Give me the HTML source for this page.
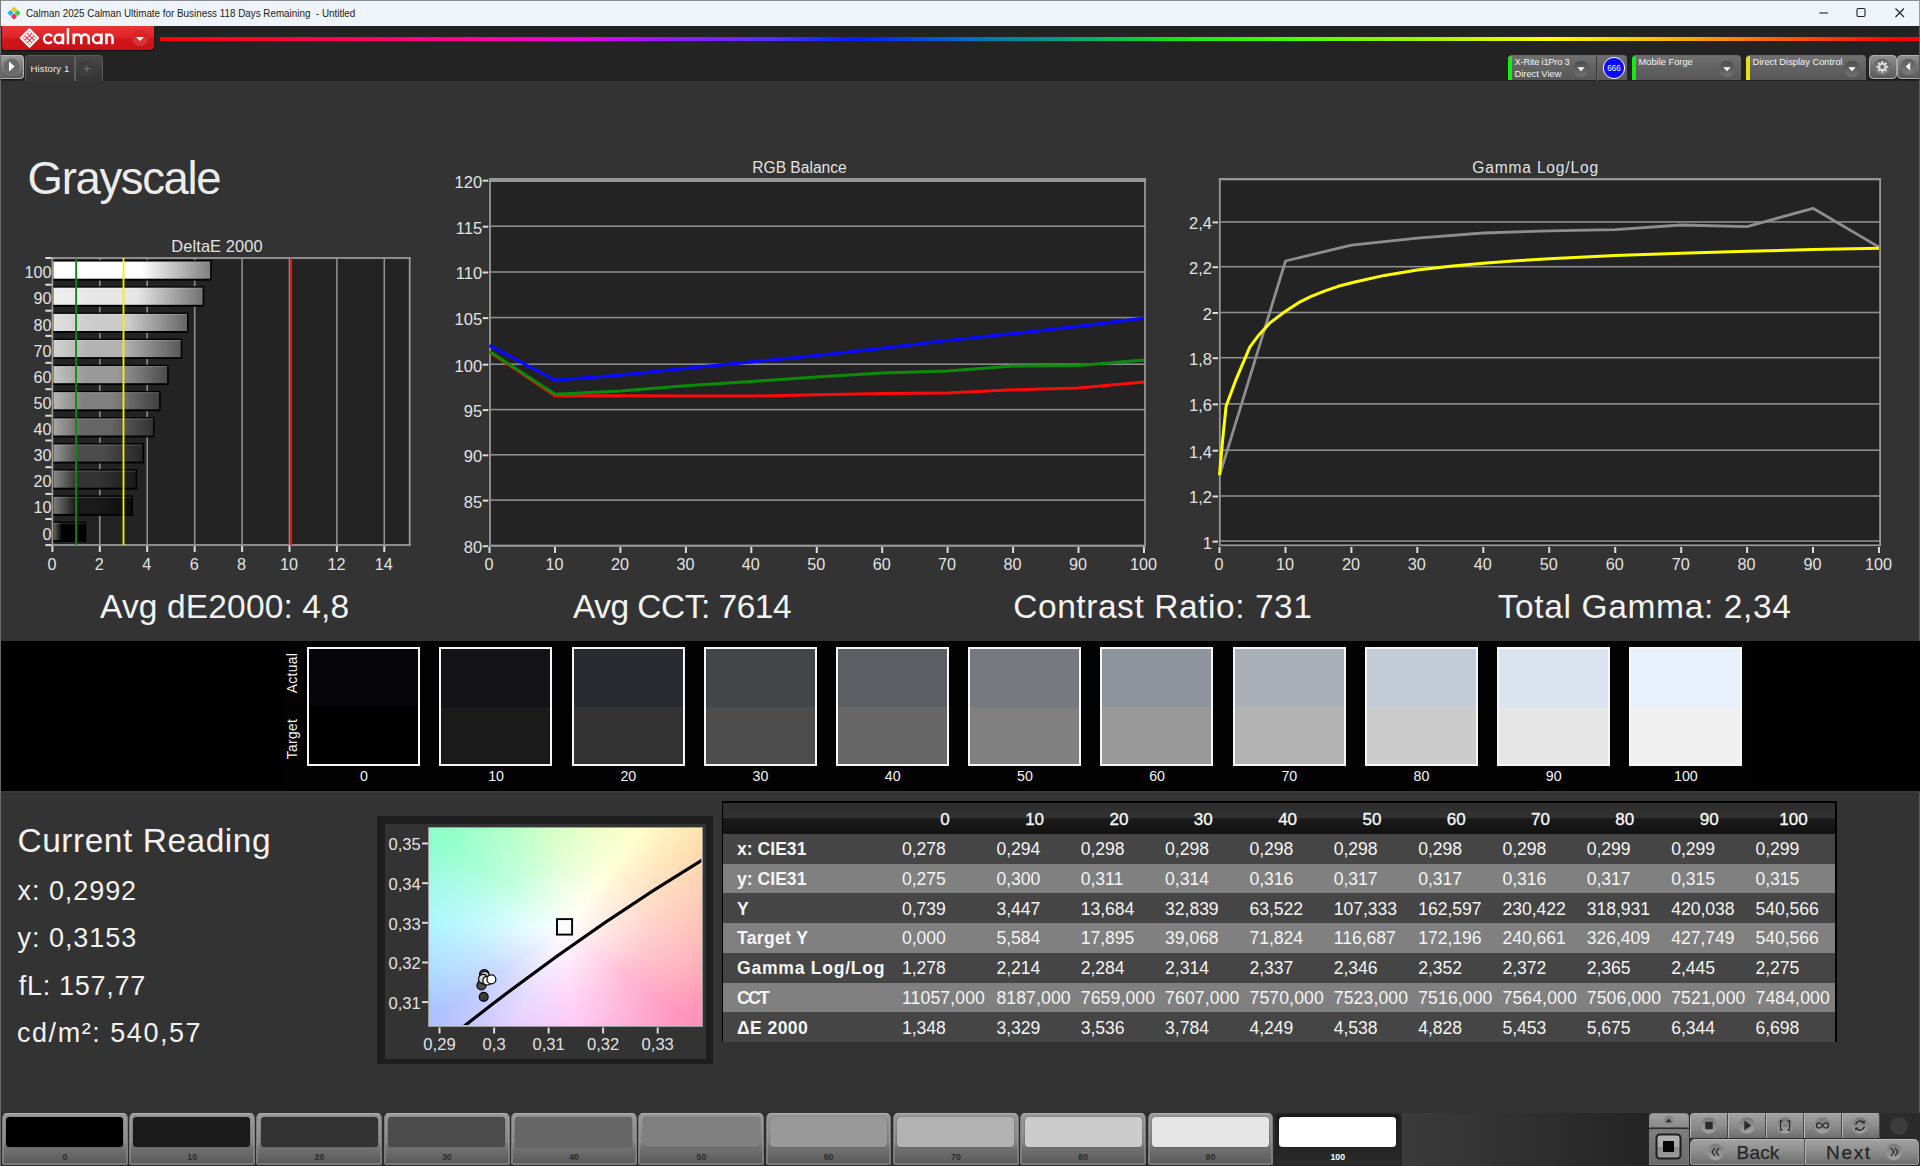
<!DOCTYPE html>
<html><head><meta charset="utf-8"><title>Calman</title>
<style>
*{box-sizing:border-box;margin:0;padding:0}
html,body{width:1920px;height:1166px;overflow:hidden;background:#333;font-family:"Liberation Sans",sans-serif;color:#e6e6e6}
.abs{position:absolute}
#root{position:relative;width:1920px;height:1166px;overflow:hidden;background:#333}
.t{position:absolute;white-space:nowrap;line-height:1}
svg{position:absolute;left:0;top:0;overflow:visible}
svg text{font-family:"Liberation Sans",sans-serif}
</style></head><body><div id="root">

<!-- title bar -->
<div class="abs" style="left:0;top:0;width:1920px;height:26px;background:#eef4f9;border-top:1px solid #8c8f92"></div>
<svg width="22" height="22" style="left:3.3px;top:1.6px" viewBox="0 0 22 22">
 <g transform="translate(11,11) rotate(45) scale(0.72)">
  <rect x="-6.6" y="-6.6" width="6.3" height="6.3" rx="1.5" fill="#f6c416"/>
  <rect x="0.3" y="-6.6" width="6.3" height="6.3" rx="1.5" fill="#3bd23b"/>
  <rect x="-6.6" y="0.3" width="6.3" height="6.3" rx="1.5" fill="#27b7ee"/>
  <rect x="0.3" y="0.3" width="6.3" height="6.3" rx="1.5" fill="#f0325f"/>
 </g>
</svg>
<div class="t" id="ttl" style="left:26px;top:8px;font-size:11.3px;color:#1b1b1b;transform-origin:0 0;transform:scaleX(0.8716)">Calman 2025 Calman Ultimate for Business 118 Days Remaining &nbsp;- Untitled</div>
<svg width="120" height="26" style="left:1800px;top:0">
 <path d="M19.4 13h8.6" stroke="#222" stroke-width="1.1" fill="none"/>
 <rect x="57" y="8.5" width="8" height="8" rx="1.2" fill="none" stroke="#222" stroke-width="1.1"/>
 <path d="M95.5 8.5l8.5 8.5M104 8.5l-8.5 8.5" stroke="#222" stroke-width="1.1" fill="none"/>
</svg>

<!-- top dark band -->
<div class="abs" style="left:0;top:26px;width:1920px;height:55px;background:#232323"></div>
<div class="abs" style="left:0;top:26px;width:1.2px;height:1140px;background:#6a6a6a;z-index:5"></div>
<div class="abs" style="left:160px;top:36.5px;width:1760px;height:4px;background:linear-gradient(90deg,#ff0000 0%,#ff0050 9.7%,#ff00a0 18%,#f000e0 24%,#b010f8 27.3%,#5030ff 34.8%,#0020ff 39.6%,#0070c0 46.2%,#00a878 51.9%,#18e018 57.6%,#40ff00 63.6%,#b4f400 73.1%,#ffff00 78.8%,#ffb000 86.4%,#ff6000 92%,#ff0000 98.9%)"></div>
<!-- logo -->
<div class="abs" style="left:1.5px;top:26px;width:152px;height:24.2px;border-radius:0 0 4px 2px;background:linear-gradient(180deg,#ea3338 0%,#e02429 45%,#d1161b 55%,#c81216 100%);box-shadow:0 1px 1px rgba(0,0,0,.6)"></div>
<svg width="160" height="30" style="left:0;top:24px" viewBox="0 0 160 30">
 <g transform="translate(29.5,14)" fill="none" stroke="#fff" stroke-width="2.1" stroke-linejoin="round">
  <path d="M0 -8.7L8.7 0L0 8.7L-8.7 0Z"/>
 </g>
 <g transform="translate(29.5,14) rotate(45)" fill="#fff">
  <rect x="-4.75" y="-4.75" width="2.6" height="2.6"/><rect x="-1.3" y="-4.75" width="2.6" height="2.6"/><rect x="2.15" y="-4.75" width="2.6" height="2.6"/>
  <rect x="-4.75" y="-1.3" width="2.6" height="2.6"/><rect x="-1.3" y="-1.3" width="2.6" height="2.6"/><rect x="2.15" y="-1.3" width="2.6" height="2.6"/>
  <rect x="-4.75" y="2.15" width="2.6" height="2.6"/><rect x="-1.3" y="2.15" width="2.6" height="2.6"/><rect x="2.15" y="2.15" width="2.6" height="2.6"/>
 </g>
 <g fill="none" stroke="#fff" stroke-width="2.45" stroke-linejoin="round">
  <path d="M51.3 11.6A4.35 4.35 0 1 0 51.3 18" stroke-linecap="round"/>
  <circle cx="58.8" cy="14.8" r="4.3"/><path d="M63 9.4V20.3"/>
  <path d="M67.95 4.3V20.3"/>
  <path d="M73.7 20.3V9.4M73.7 14.3A3.775 3.775 0 0 1 81.25 14.3V20.3M81.25 14.3A3.775 3.775 0 0 1 88.8 14.3V20.3"/>
  <circle cx="97.2" cy="14.8" r="4.3"/><path d="M101.4 9.4V20.3"/>
  <path d="M106.4 20.3V9.4M106.4 13.7A3.075 3.075 0 0 1 112.55 13.7V20.3"/>
 </g>
 <circle cx="140" cy="13.9" r="8.2" fill="#d4262b"/>
 <path d="M140 22.1a8.2 8.2 0 0 0 8.2-8.2h-16.4a8.2 8.2 0 0 0 8.2 8.2z" fill="#dc3a3e" opacity=".6"/>
 <path d="M136 13h8l-4 4.1z" fill="#fff"/>
</svg>

<!-- left tabs -->
<div class="abs" style="left:1px;top:55px;width:23px;height:24px;border-radius:0 4px 4px 0;background:linear-gradient(180deg,#9a9a9a,#5e5e5e);border:1px solid #b4b4b4;border-left:none;box-shadow:0 1px 1px #111"></div>
<svg width="24" height="26" style="left:0;top:54px"><circle cx="11.5" cy="12.5" r="8.3" fill="#6a6a6a"/><circle cx="11.5" cy="13" r="8.3" fill="none" stroke="#7d7d7d" stroke-width=".8"/><path d="M9 7.6v9.8l5.6-4.9z" fill="#fff"/></svg>
<div class="abs" style="left:25px;top:55px;width:50px;height:26px;border-radius:4px 0 0 0;background:linear-gradient(180deg,#464646,#343434);border:1px solid #5a5a5a;border-bottom:none"></div>
<div class="abs" style="left:75px;top:55px;width:28px;height:26px;border-radius:0 4px 0 0;background:linear-gradient(180deg,#484848,#343434);border:1px solid #5a5a5a;border-bottom:none;border-left:1px solid #626262"></div>
<div class="t" style="left:30.5px;top:63.5px;font-size:9.6px;letter-spacing:0.13px;color:#e8e8e8">History 1</div>
<svg width="30" height="26" style="left:74px;top:55px"><circle cx="13" cy="13.5" r="8" fill="#3e3e3e"/><path d="M13 10.4v6.4M9.8 13.6h6.4" stroke="#6c6c6c" stroke-width="1.2"/></svg>
<!-- device selectors -->
<svg width="0" height="0"><defs><linearGradient id="ddg" x1="0" y1="0" x2="0" y2="1"><stop offset="0" stop-color="#4c4c4c"/><stop offset="1" stop-color="#727272"/></linearGradient></defs></svg>
<div class="abs" style="left:1507.5px;top:55px;width:119px;height:25.3px;border-radius:4px 4px 0 0;background:linear-gradient(180deg,#707070 0%,#646464 40%,#575757 100%);overflow:hidden;border-top:1px solid #6c6c6c"><div class="abs" style="left:0;top:-1px;width:4px;height:26px;background:#12ee12"></div></div><div class="t" style="left:1514.5px;top:57.6px;font-size:9.3px;color:#f2f2f2;letter-spacing:-0.2px">X-Rite i1Pro 3</div><div class="t" style="left:1514.5px;top:69.6px;font-size:9.3px;color:#f2f2f2;letter-spacing:0px">Direct View</div><svg width="20" height="20" style="left:1571px;top:58.5px"><circle cx="10" cy="10" r="8.2" fill="url(#ddg)"/><path d="M6.3 8.2h7.4l-3.7 4z" fill="#fff"/></svg><div class="abs" style="left:1596px;top:56px;width:1px;height:25px;background:#3a3a3a"></div><div class="abs" style="left:1597px;top:56px;width:1px;height:25px;background:#666"></div><svg width="26" height="26" style="left:1600.5px;top:54.6px"><circle cx="13" cy="13" r="10.6" fill="#0a0aff" stroke="#fff" stroke-width="1"/><text x="13" y="15.8" font-size="8.2" fill="#fff" text-anchor="middle">666</text></svg>
<div class="abs" style="left:1631.5px;top:55px;width:109px;height:25.3px;border-radius:4px 4px 0 0;background:linear-gradient(180deg,#707070 0%,#646464 40%,#575757 100%);overflow:hidden;border-top:1px solid #6c6c6c"><div class="abs" style="left:0;top:-1px;width:4px;height:26px;background:#12ee12"></div></div><div class="t" style="left:1638.5px;top:57.6px;font-size:9.3px;color:#f2f2f2;letter-spacing:0px">Mobile Forge</div><svg width="20" height="20" style="left:1717px;top:58.5px"><circle cx="10" cy="10" r="8.2" fill="url(#ddg)"/><path d="M6.3 8.2h7.4l-3.7 4z" fill="#fff"/></svg>
<div class="abs" style="left:1745.5px;top:55px;width:120.5px;height:25.3px;border-radius:4px 4px 0 0;background:linear-gradient(180deg,#707070 0%,#646464 40%,#575757 100%);overflow:hidden;border-top:1px solid #6c6c6c"><div class="abs" style="left:0;top:-1px;width:4px;height:26px;background:#e8e010"></div></div><div class="t" style="left:1752.5px;top:57.6px;font-size:9.3px;color:#f2f2f2;letter-spacing:0px">Direct Display Control</div><svg width="20" height="20" style="left:1842px;top:58.5px"><circle cx="10" cy="10" r="8.2" fill="url(#ddg)"/><path d="M6.3 8.2h7.4l-3.7 4z" fill="#fff"/></svg>
<div class="abs" style="left:1868.5px;top:55px;width:28px;height:24px;border-radius:4px;background:linear-gradient(180deg,#8e8e8e,#595959);border:1px solid #b0b0b0;box-shadow:0 1px 1px #111"></div>
<div class="abs" style="left:1897px;top:55px;width:26px;height:24px;border-radius:4px 0 0 4px;background:linear-gradient(180deg,#8e8e8e,#595959);border:1px solid #b0b0b0;box-shadow:0 1px 1px #111"></div>
<svg width="60" height="30" style="left:1866px;top:52px">
 <defs><linearGradient id="gcb" x1="0" y1="0" x2="0" y2="1"><stop offset="0" stop-color="#5e5e5e"/><stop offset="1" stop-color="#7c7c7c"/></linearGradient></defs>
 <circle cx="16.3" cy="14.9" r="8.2" fill="url(#gcb)"/>
 <g transform="translate(16.3,14.9)" fill="none" stroke="#dadada">
  <circle r="3.2" stroke-width="2.1"/>
  <g stroke-width="2.2"><path d="M0 -3.9V-5.9"/><path d="M0 3.9V5.9"/><path d="M-3.9 0H-5.9"/><path d="M3.9 0H5.9"/><path d="M2.76 2.76L4.17 4.17"/><path d="M-2.76 2.76L-4.17 4.17"/><path d="M2.76 -2.76L4.17 -4.17"/><path d="M-2.76 -2.76L-4.17 -4.17"/></g>
 </g>
 <circle cx="42.5" cy="14.9" r="8.2" fill="url(#gcb)"/>
 <path d="M44.2 10.6v7.8l-4.4-3.9z" fill="#fff"/>
</svg>
<div class="abs" style="left:1919px;top:26px;width:1px;height:1140px;background:#5a5a5a"></div>
<div class="abs" style="left:1919px;top:0;width:1px;height:26px;background:#9a9da0"></div>
<div class="abs" style="left:0;top:0;width:1px;height:26px;background:#7a7c7e"></div>
<!-- headings -->
<div class="t" id="gs" style="left:27.6px;top:156.2px;font-size:45.5px;color:#ececec;letter-spacing:-1.35px">Grayscale</div>
<div class="t" id="s1" style="left:100.1px;top:589.6px;font-size:33.5px;color:#f2f2f2;letter-spacing:0.14px">Avg dE2000: 4,8</div>
<div class="t" id="s2" style="left:572.9px;top:589.6px;font-size:33.5px;color:#f2f2f2;letter-spacing:-0.5px">Avg CCT: 7614</div>
<div class="t" id="s3" style="left:1013.2px;top:589.6px;font-size:33.5px;color:#f2f2f2;letter-spacing:0.56px">Contrast Ratio: 731</div>
<div class="t" id="s4" style="left:1497.7px;top:589.6px;font-size:33.5px;color:#f2f2f2;letter-spacing:0.64px">Total Gamma: 2,34</div>
<!-- DeltaE chart -->
<svg width="440" height="330" style="left:0;top:240px" viewBox="0 240 440 330">
<defs>
<linearGradient id="bg0" x1="0" x2="1" y1="0" y2="0"><stop offset="0" stop-color="#666666"/><stop offset="0.28" stop-color="#000000"/><stop offset="0.56" stop-color="#000000"/><stop offset="1" stop-color="#000000"/></linearGradient>
<linearGradient id="bg1" x1="0" x2="1" y1="0" y2="0"><stop offset="0" stop-color="#7a7a7a"/><stop offset="0.28" stop-color="#1a1a1a"/><stop offset="0.56" stop-color="#1a1a1a"/><stop offset="1" stop-color="#0d0d0d"/></linearGradient>
<linearGradient id="bg2" x1="0" x2="1" y1="0" y2="0"><stop offset="0" stop-color="#898989"/><stop offset="0.28" stop-color="#333333"/><stop offset="0.56" stop-color="#333333"/><stop offset="1" stop-color="#1a1a1a"/></linearGradient>
<linearGradient id="bg3" x1="0" x2="1" y1="0" y2="0"><stop offset="0" stop-color="#979797"/><stop offset="0.28" stop-color="#4c4c4c"/><stop offset="0.56" stop-color="#4c4c4c"/><stop offset="1" stop-color="#262626"/></linearGradient>
<linearGradient id="bg4" x1="0" x2="1" y1="0" y2="0"><stop offset="0" stop-color="#a6a6a6"/><stop offset="0.28" stop-color="#666666"/><stop offset="0.56" stop-color="#666666"/><stop offset="1" stop-color="#333333"/></linearGradient>
<linearGradient id="bg5" x1="0" x2="1" y1="0" y2="0"><stop offset="0" stop-color="#b5b5b5"/><stop offset="0.28" stop-color="#808080"/><stop offset="0.56" stop-color="#808080"/><stop offset="1" stop-color="#404040"/></linearGradient>
<linearGradient id="bg6" x1="0" x2="1" y1="0" y2="0"><stop offset="0" stop-color="#c4c4c4"/><stop offset="0.28" stop-color="#999999"/><stop offset="0.56" stop-color="#999999"/><stop offset="1" stop-color="#4c4c4c"/></linearGradient>
<linearGradient id="bg7" x1="0" x2="1" y1="0" y2="0"><stop offset="0" stop-color="#d2d2d2"/><stop offset="0.28" stop-color="#b2b2b2"/><stop offset="0.56" stop-color="#b2b2b2"/><stop offset="1" stop-color="#595959"/></linearGradient>
<linearGradient id="bg8" x1="0" x2="1" y1="0" y2="0"><stop offset="0" stop-color="#e1e1e1"/><stop offset="0.28" stop-color="#cccccc"/><stop offset="0.56" stop-color="#cccccc"/><stop offset="1" stop-color="#666666"/></linearGradient>
<linearGradient id="bg9" x1="0" x2="1" y1="0" y2="0"><stop offset="0" stop-color="#f0f0f0"/><stop offset="0.28" stop-color="#e6e6e6"/><stop offset="0.56" stop-color="#e6e6e6"/><stop offset="1" stop-color="#737373"/></linearGradient>
<linearGradient id="bg10" x1="0" x2="1" y1="0" y2="0"><stop offset="0" stop-color="#ffffff"/><stop offset="0.28" stop-color="#ffffff"/><stop offset="0.56" stop-color="#ffffff"/><stop offset="1" stop-color="#808080"/></linearGradient>
</defs>
<rect x="51.4" y="257.0" width="359.3" height="289.0" fill="#232323"/>
<rect x="99.0" y="258.0" width="1.6" height="287.0" fill="#8e8e8e"/>
<rect x="146.4" y="258.0" width="1.6" height="287.0" fill="#8e8e8e"/>
<rect x="193.9" y="258.0" width="1.6" height="287.0" fill="#8e8e8e"/>
<rect x="241.3" y="258.0" width="1.6" height="287.0" fill="#8e8e8e"/>
<rect x="288.7" y="258.0" width="1.6" height="287.0" fill="#8e8e8e"/>
<rect x="336.1" y="258.0" width="1.6" height="287.0" fill="#8e8e8e"/>
<rect x="383.5" y="258.0" width="1.6" height="287.0" fill="#8e8e8e"/>
<rect x="51.5" y="257.1" width="359.1" height="1.8" fill="#9a9a9a"/>
<rect x="51.5" y="544.1" width="359.1" height="1.8" fill="#9a9a9a"/>
<rect x="51.5" y="257.1" width="1.8" height="288.8" fill="#9a9a9a"/>
<rect x="408.8" y="257.1" width="1.8" height="288.8" fill="#9a9a9a"/>
<rect x="53.4" y="521.5" width="32.9" height="20.4" fill="#000"/>
<rect x="53.4" y="522.9" width="31.4" height="17.1" fill="url(#bg0)"/>
<rect x="53.4" y="522.9" width="31.4" height="1" fill="#fff" opacity="0.18"/>
<rect x="53.4" y="495.4" width="79.6" height="20.4" fill="#000"/>
<rect x="53.4" y="496.8" width="78.1" height="17.1" fill="url(#bg1)"/>
<rect x="53.4" y="496.8" width="78.1" height="1" fill="#fff" opacity="0.18"/>
<rect x="53.4" y="469.2" width="83.8" height="20.4" fill="#000"/>
<rect x="53.4" y="470.6" width="82.3" height="17.1" fill="url(#bg2)"/>
<rect x="53.4" y="470.6" width="82.3" height="1" fill="#fff" opacity="0.18"/>
<rect x="53.4" y="443.1" width="90.5" height="20.4" fill="#000"/>
<rect x="53.4" y="444.5" width="89.0" height="17.1" fill="url(#bg3)"/>
<rect x="53.4" y="444.5" width="89.0" height="1" fill="#fff" opacity="0.18"/>
<rect x="53.4" y="417.0" width="101.1" height="20.4" fill="#000"/>
<rect x="53.4" y="418.4" width="99.6" height="17.1" fill="url(#bg4)"/>
<rect x="53.4" y="418.4" width="99.6" height="1" fill="#fff" opacity="0.18"/>
<rect x="53.4" y="390.9" width="107.2" height="20.4" fill="#000"/>
<rect x="53.4" y="392.2" width="105.7" height="17.1" fill="url(#bg5)"/>
<rect x="53.4" y="392.2" width="105.7" height="1" fill="#fff" opacity="0.18"/>
<rect x="53.4" y="364.7" width="115.2" height="20.4" fill="#000"/>
<rect x="53.4" y="366.1" width="113.7" height="17.1" fill="url(#bg6)"/>
<rect x="53.4" y="366.1" width="113.7" height="1" fill="#fff" opacity="0.18"/>
<rect x="53.4" y="338.6" width="128.8" height="20.4" fill="#000"/>
<rect x="53.4" y="340.0" width="127.3" height="17.1" fill="url(#bg7)"/>
<rect x="53.4" y="340.0" width="127.3" height="1" fill="#fff" opacity="0.18"/>
<rect x="53.4" y="312.5" width="135.1" height="20.4" fill="#000"/>
<rect x="53.4" y="313.9" width="133.6" height="17.1" fill="url(#bg8)"/>
<rect x="53.4" y="313.9" width="133.6" height="1" fill="#fff" opacity="0.18"/>
<rect x="53.4" y="286.3" width="150.7" height="20.4" fill="#000"/>
<rect x="53.4" y="287.7" width="149.2" height="17.1" fill="url(#bg9)"/>
<rect x="53.4" y="287.7" width="149.2" height="1" fill="#fff" opacity="0.18"/>
<rect x="53.4" y="260.2" width="158.2" height="20.4" fill="#000"/>
<rect x="53.4" y="261.6" width="156.7" height="17.1" fill="url(#bg10)"/>
<rect x="53.4" y="261.6" width="156.7" height="1" fill="#fff" opacity="0.18"/>
<rect x="75.2" y="258.0" width="1.8" height="287.0" fill="#0c8a0c"/>
<rect x="122.6" y="258.0" width="1.8" height="287.0" fill="#f6f000"/>
<rect x="290.3" y="258.0" width="1.8" height="287.0" fill="#f41010"/>
<rect x="45.3" y="257.0" width="6.4" height="2" fill="#dcdcdc"/>
<rect x="45.3" y="283.7" width="6.4" height="2" fill="#dcdcdc"/>
<rect x="45.3" y="309.7" width="6.4" height="2" fill="#dcdcdc"/>
<rect x="45.3" y="334.9" width="6.4" height="2" fill="#dcdcdc"/>
<rect x="45.3" y="361.8" width="6.4" height="2" fill="#dcdcdc"/>
<rect x="45.3" y="388.2" width="6.4" height="2" fill="#dcdcdc"/>
<rect x="45.3" y="414.7" width="6.4" height="2" fill="#dcdcdc"/>
<rect x="45.3" y="439.5" width="6.4" height="2" fill="#dcdcdc"/>
<rect x="45.3" y="466.2" width="6.4" height="2" fill="#dcdcdc"/>
<rect x="45.3" y="492.9" width="6.4" height="2" fill="#dcdcdc"/>
<rect x="45.3" y="518.0" width="6.4" height="2" fill="#dcdcdc"/>
<rect x="45.3" y="544.1" width="6.4" height="2" fill="#dcdcdc"/>
<text x="51.5" y="539.5" font-size="16.2" fill="#e2e2e2" text-anchor="end">0</text>
<text x="51.5" y="513.4" font-size="16.2" fill="#e2e2e2" text-anchor="end">10</text>
<text x="51.5" y="487.2" font-size="16.2" fill="#e2e2e2" text-anchor="end">20</text>
<text x="51.5" y="461.1" font-size="16.2" fill="#e2e2e2" text-anchor="end">30</text>
<text x="51.5" y="435.0" font-size="16.2" fill="#e2e2e2" text-anchor="end">40</text>
<text x="51.5" y="408.9" font-size="16.2" fill="#e2e2e2" text-anchor="end">50</text>
<text x="51.5" y="382.7" font-size="16.2" fill="#e2e2e2" text-anchor="end">60</text>
<text x="51.5" y="356.6" font-size="16.2" fill="#e2e2e2" text-anchor="end">70</text>
<text x="51.5" y="330.5" font-size="16.2" fill="#e2e2e2" text-anchor="end">80</text>
<text x="51.5" y="304.3" font-size="16.2" fill="#e2e2e2" text-anchor="end">90</text>
<text x="51.5" y="278.2" font-size="16.2" fill="#e2e2e2" text-anchor="end">100</text>
<rect x="51.4" y="546.0" width="2" height="6" fill="#dcdcdc"/>
<text x="51.9" y="570.2" font-size="16.2" fill="#e2e2e2" text-anchor="middle">0</text>
<rect x="98.8" y="546.0" width="2" height="6" fill="#dcdcdc"/>
<text x="99.3" y="570.2" font-size="16.2" fill="#e2e2e2" text-anchor="middle">2</text>
<rect x="146.2" y="546.0" width="2" height="6" fill="#dcdcdc"/>
<text x="146.7" y="570.2" font-size="16.2" fill="#e2e2e2" text-anchor="middle">4</text>
<rect x="193.7" y="546.0" width="2" height="6" fill="#dcdcdc"/>
<text x="194.2" y="570.2" font-size="16.2" fill="#e2e2e2" text-anchor="middle">6</text>
<rect x="241.1" y="546.0" width="2" height="6" fill="#dcdcdc"/>
<text x="241.6" y="570.2" font-size="16.2" fill="#e2e2e2" text-anchor="middle">8</text>
<rect x="288.5" y="546.0" width="2" height="6" fill="#dcdcdc"/>
<text x="289.0" y="570.2" font-size="16.2" fill="#e2e2e2" text-anchor="middle">10</text>
<rect x="335.9" y="546.0" width="2" height="6" fill="#dcdcdc"/>
<text x="336.4" y="570.2" font-size="16.2" fill="#e2e2e2" text-anchor="middle">12</text>
<rect x="383.3" y="546.0" width="2" height="6" fill="#dcdcdc"/>
<text x="383.8" y="570.2" font-size="16.2" fill="#e2e2e2" text-anchor="middle">14</text>
<text x="217" y="252.2" font-size="16.4" fill="#e2e2e2" text-anchor="middle" letter-spacing="0.1">DeltaE 2000</text>
</svg>
<!-- RGB Balance -->
<svg width="1920" height="600" style="left:0;top:0">
<rect x="489.0" y="179.0" width="657.0" height="367.0" fill="#232323"/>
<rect x="490.0" y="544.9" width="655.0" height="1.6" fill="#8e8e8e"/>
<rect x="482.7" y="545.2" width="5.6" height="2" fill="#dcdcdc"/>
<text x="482.1" y="553.1" font-size="16.5" fill="#e2e2e2" text-anchor="end">80</text>
<rect x="490.0" y="499.3" width="655.0" height="1.6" fill="#8e8e8e"/>
<rect x="482.7" y="499.6" width="5.6" height="2" fill="#dcdcdc"/>
<text x="482.1" y="507.5" font-size="16.5" fill="#e2e2e2" text-anchor="end">85</text>
<rect x="490.0" y="454.0" width="655.0" height="1.6" fill="#8e8e8e"/>
<rect x="482.7" y="454.3" width="5.6" height="2" fill="#dcdcdc"/>
<text x="482.1" y="462.2" font-size="16.5" fill="#e2e2e2" text-anchor="end">90</text>
<rect x="490.0" y="408.8" width="655.0" height="1.6" fill="#8e8e8e"/>
<rect x="482.7" y="409.1" width="5.6" height="2" fill="#dcdcdc"/>
<text x="482.1" y="417.0" font-size="16.5" fill="#e2e2e2" text-anchor="end">95</text>
<rect x="490.0" y="363.4" width="655.0" height="1.6" fill="#8e8e8e"/>
<rect x="482.7" y="363.7" width="5.6" height="2" fill="#dcdcdc"/>
<text x="482.1" y="371.6" font-size="16.5" fill="#e2e2e2" text-anchor="end">100</text>
<rect x="490.0" y="316.8" width="655.0" height="1.6" fill="#8e8e8e"/>
<rect x="482.7" y="317.1" width="5.6" height="2" fill="#dcdcdc"/>
<text x="482.1" y="325.0" font-size="16.5" fill="#e2e2e2" text-anchor="end">105</text>
<rect x="490.0" y="271.2" width="655.0" height="1.6" fill="#8e8e8e"/>
<rect x="482.7" y="271.5" width="5.6" height="2" fill="#dcdcdc"/>
<text x="482.1" y="279.4" font-size="16.5" fill="#e2e2e2" text-anchor="end">110</text>
<rect x="490.0" y="225.4" width="655.0" height="1.6" fill="#8e8e8e"/>
<rect x="482.7" y="225.7" width="5.6" height="2" fill="#dcdcdc"/>
<text x="482.1" y="233.6" font-size="16.5" fill="#e2e2e2" text-anchor="end">115</text>
<rect x="490.0" y="179.4" width="655.0" height="1.6" fill="#8e8e8e"/>
<rect x="482.7" y="179.7" width="5.6" height="2" fill="#dcdcdc"/>
<text x="482.1" y="187.6" font-size="16.5" fill="#e2e2e2" text-anchor="end">120</text>
<rect x="489.0" y="178" width="657.0" height="4" fill="#989898"/>
<rect x="489.0" y="544.7" width="657.0" height="2" fill="#989898"/>
<rect x="489.1" y="178" width="1.8" height="368" fill="#989898"/>
<rect x="1144.1" y="178" width="1.8" height="368" fill="#989898"/>
<rect x="488.5" y="547.0" width="2" height="6" fill="#dcdcdc"/>
<text x="489.0" y="570.2" font-size="16.2" fill="#e2e2e2" text-anchor="middle">0</text>
<rect x="554.0" y="547.0" width="2" height="6" fill="#dcdcdc"/>
<text x="554.5" y="570.2" font-size="16.2" fill="#e2e2e2" text-anchor="middle">10</text>
<rect x="619.4" y="547.0" width="2" height="6" fill="#dcdcdc"/>
<text x="619.9" y="570.2" font-size="16.2" fill="#e2e2e2" text-anchor="middle">20</text>
<rect x="684.9" y="547.0" width="2" height="6" fill="#dcdcdc"/>
<text x="685.4" y="570.2" font-size="16.2" fill="#e2e2e2" text-anchor="middle">30</text>
<rect x="750.3" y="547.0" width="2" height="6" fill="#dcdcdc"/>
<text x="750.8" y="570.2" font-size="16.2" fill="#e2e2e2" text-anchor="middle">40</text>
<rect x="815.8" y="547.0" width="2" height="6" fill="#dcdcdc"/>
<text x="816.2" y="570.2" font-size="16.2" fill="#e2e2e2" text-anchor="middle">50</text>
<rect x="881.2" y="547.0" width="2" height="6" fill="#dcdcdc"/>
<text x="881.7" y="570.2" font-size="16.2" fill="#e2e2e2" text-anchor="middle">60</text>
<rect x="946.6" y="547.0" width="2" height="6" fill="#dcdcdc"/>
<text x="947.1" y="570.2" font-size="16.2" fill="#e2e2e2" text-anchor="middle">70</text>
<rect x="1012.1" y="547.0" width="2" height="6" fill="#dcdcdc"/>
<text x="1012.6" y="570.2" font-size="16.2" fill="#e2e2e2" text-anchor="middle">80</text>
<rect x="1077.5" y="547.0" width="2" height="6" fill="#dcdcdc"/>
<text x="1078.0" y="570.2" font-size="16.2" fill="#e2e2e2" text-anchor="middle">90</text>
<rect x="1143.0" y="547.0" width="2" height="6" fill="#dcdcdc"/>
<text x="1143.5" y="570.2" font-size="16.2" fill="#e2e2e2" text-anchor="middle">100</text>
<text x="799.5" y="173.2" font-size="15.6" fill="#e2e2e2" text-anchor="middle" letter-spacing="0">RGB Balance</text>
<path d="M489.5 351.9 L555.0 395.7 L620.4 395.7 L685.9 396.1 L751.3 396.1 L816.8 394.8 L882.2 393.4 L947.6 393.0 L1013.1 389.8 L1078.5 387.9 L1144.0 382.0" fill="none" stroke="#ff0a0a" stroke-width="3.0" stroke-linejoin="round" stroke-linecap="butt"/>
<path d="M489.5 351.4 L555.0 394.3 L620.4 391.1 L685.9 385.7 L751.3 381.5 L816.8 377.0 L882.2 372.9 L947.6 371.1 L1013.1 366.0 L1078.5 365.6 L1144.0 360.1" fill="none" stroke="#0a8c0a" stroke-width="3.0" stroke-linejoin="round" stroke-linecap="butt"/>
<path d="M489.5 345.5 L555.0 380.2 L620.4 375.2 L685.9 368.3 L751.3 361.9 L816.8 355.5 L882.2 348.3 L947.6 340.5 L1013.1 333.7 L1078.5 326.4 L1144.0 318.1" fill="none" stroke="#0a0aff" stroke-width="3.2" stroke-linejoin="round" stroke-linecap="butt"/>
</svg>
<!-- Gamma Log/Log -->
<svg width="1920" height="600" style="left:0;top:0">
<rect x="1218.8" y="179.0" width="662.3" height="367.0" fill="#232323"/>
<rect x="1219.8" y="540.3" width="660.3" height="1.6" fill="#8e8e8e"/>
<rect x="1212.5" y="540.6" width="5.6" height="2" fill="#dcdcdc"/>
<text x="1211.8999999999999" y="548.5" font-size="16.5" fill="#e2e2e2" text-anchor="end">1</text>
<rect x="1219.8" y="495.2" width="660.3" height="1.6" fill="#8e8e8e"/>
<rect x="1212.5" y="495.5" width="5.6" height="2" fill="#dcdcdc"/>
<text x="1211.8999999999999" y="503.4" font-size="16.5" fill="#e2e2e2" text-anchor="end">1,2</text>
<rect x="1219.8" y="449.4" width="660.3" height="1.6" fill="#8e8e8e"/>
<rect x="1212.5" y="449.7" width="5.6" height="2" fill="#dcdcdc"/>
<text x="1211.8999999999999" y="457.6" font-size="16.5" fill="#e2e2e2" text-anchor="end">1,4</text>
<rect x="1219.8" y="403.1" width="660.3" height="1.6" fill="#8e8e8e"/>
<rect x="1212.5" y="403.4" width="5.6" height="2" fill="#dcdcdc"/>
<text x="1211.8999999999999" y="411.3" font-size="16.5" fill="#e2e2e2" text-anchor="end">1,6</text>
<rect x="1219.8" y="356.9" width="660.3" height="1.6" fill="#8e8e8e"/>
<rect x="1212.5" y="357.2" width="5.6" height="2" fill="#dcdcdc"/>
<text x="1211.8999999999999" y="365.1" font-size="16.5" fill="#e2e2e2" text-anchor="end">1,8</text>
<rect x="1219.8" y="311.7" width="660.3" height="1.6" fill="#8e8e8e"/>
<rect x="1212.5" y="312.0" width="5.6" height="2" fill="#dcdcdc"/>
<text x="1211.8999999999999" y="319.9" font-size="16.5" fill="#e2e2e2" text-anchor="end">2</text>
<rect x="1219.8" y="265.9" width="660.3" height="1.6" fill="#8e8e8e"/>
<rect x="1212.5" y="266.2" width="5.6" height="2" fill="#dcdcdc"/>
<text x="1211.8999999999999" y="274.1" font-size="16.5" fill="#e2e2e2" text-anchor="end">2,2</text>
<rect x="1219.8" y="221.1" width="660.3" height="1.6" fill="#8e8e8e"/>
<rect x="1212.5" y="221.4" width="5.6" height="2" fill="#dcdcdc"/>
<text x="1211.8999999999999" y="229.3" font-size="16.5" fill="#e2e2e2" text-anchor="end">2,4</text>
<rect x="1218.8" y="178" width="662.3" height="2.3" fill="#989898"/>
<rect x="1218.8" y="542.1" width="662.3" height="2.3" fill="#1c1c1c"/>
<rect x="1218.8" y="544.4" width="662.3" height="1.7" fill="#989898"/>
<rect x="1218.8999999999999" y="178" width="1.8" height="368" fill="#989898"/>
<rect x="1879.1999999999998" y="178" width="1.8" height="368" fill="#989898"/>
<rect x="1218.5" y="547.0" width="2" height="6" fill="#dcdcdc"/>
<text x="1219.0" y="570.2" font-size="16.2" fill="#e2e2e2" text-anchor="middle">0</text>
<rect x="1284.5" y="547.0" width="2" height="6" fill="#dcdcdc"/>
<text x="1285.0" y="570.2" font-size="16.2" fill="#e2e2e2" text-anchor="middle">10</text>
<rect x="1350.4" y="547.0" width="2" height="6" fill="#dcdcdc"/>
<text x="1350.9" y="570.2" font-size="16.2" fill="#e2e2e2" text-anchor="middle">20</text>
<rect x="1416.3" y="547.0" width="2" height="6" fill="#dcdcdc"/>
<text x="1416.8" y="570.2" font-size="16.2" fill="#e2e2e2" text-anchor="middle">30</text>
<rect x="1482.3" y="547.0" width="2" height="6" fill="#dcdcdc"/>
<text x="1482.8" y="570.2" font-size="16.2" fill="#e2e2e2" text-anchor="middle">40</text>
<rect x="1548.2" y="547.0" width="2" height="6" fill="#dcdcdc"/>
<text x="1548.8" y="570.2" font-size="16.2" fill="#e2e2e2" text-anchor="middle">50</text>
<rect x="1614.2" y="547.0" width="2" height="6" fill="#dcdcdc"/>
<text x="1614.7" y="570.2" font-size="16.2" fill="#e2e2e2" text-anchor="middle">60</text>
<rect x="1680.2" y="547.0" width="2" height="6" fill="#dcdcdc"/>
<text x="1680.7" y="570.2" font-size="16.2" fill="#e2e2e2" text-anchor="middle">70</text>
<rect x="1746.1" y="547.0" width="2" height="6" fill="#dcdcdc"/>
<text x="1746.6" y="570.2" font-size="16.2" fill="#e2e2e2" text-anchor="middle">80</text>
<rect x="1812.0" y="547.0" width="2" height="6" fill="#dcdcdc"/>
<text x="1812.5" y="570.2" font-size="16.2" fill="#e2e2e2" text-anchor="middle">90</text>
<rect x="1878.0" y="547.0" width="2" height="6" fill="#dcdcdc"/>
<text x="1878.5" y="570.2" font-size="16.2" fill="#e2e2e2" text-anchor="middle">100</text>
<text x="1535.6" y="173.2" font-size="15.6" fill="#e2e2e2" text-anchor="middle" letter-spacing="0.8">Gamma Log/Log</text>
<path d="M1219.5 475.6 L1285.5 261.0 L1351.4 245.1 L1417.3 238.2 L1483.3 233.0 L1549.2 230.9 L1615.2 229.6 L1681.2 225.0 L1747.1 226.6 L1813.0 208.3 L1879.0 247.1" fill="none" stroke="#8e8e8e" stroke-width="2.8" stroke-linejoin="round" stroke-linecap="butt"/>
<path d="M1219.5 475.1 L1222.8 438.4 L1226.1 406.3 L1236.0 379.6 L1249.8 347.2 L1259.1 334.7 L1270.3 322.6 L1285.5 311.2 L1298.6 302.7 L1311.2 296.4 L1325.0 290.9 L1338.2 286.3 L1356.0 281.8 L1384.4 275.4 L1417.3 270.1 L1450.3 266.3 L1483.3 263.3 L1516.3 260.8 L1549.2 258.7 L1615.2 255.5 L1681.2 253.3 L1747.1 251.2 L1813.0 249.6 L1879.0 248.2" fill="none" stroke="#ffff00" stroke-width="3.0" stroke-linejoin="round" stroke-linecap="butt"/>
</svg>
<!-- swatch band -->
<div class="abs" style="left:0;top:640.5px;width:1920px;height:150.5px;background:#000"></div>
<div class="abs" style="left:284px;top:641px;width:1470px;height:149px;background:#020202"></div>
<div class="abs" style="left:307.1px;top:647.1px;width:113.2px;height:118.6px;border:2px solid #f6f6f6;background:linear-gradient(180deg,#050509 0,#050509 50%,#000000 50%,#000000 100%)"></div>
<div class="t" style="left:307.1px;top:769.2px;width:113.6px;text-align:center;font-size:14.2px;color:#f4f4f4">0</div>
<div class="abs" style="left:439.3px;top:647.1px;width:113.2px;height:118.6px;border:2px solid #f6f6f6;background:linear-gradient(180deg,#131318 0,#131318 50%,#1a1a1a 50%,#1a1a1a 100%)"></div>
<div class="t" style="left:439.3px;top:769.2px;width:113.6px;text-align:center;font-size:14.2px;color:#f4f4f4">10</div>
<div class="abs" style="left:571.5px;top:647.1px;width:113.2px;height:118.6px;border:2px solid #f6f6f6;background:linear-gradient(180deg,#2a2b30 0,#2a2b30 50%,#333333 50%,#333333 100%)"></div>
<div class="t" style="left:571.5px;top:769.2px;width:113.6px;text-align:center;font-size:14.2px;color:#f4f4f4">20</div>
<div class="abs" style="left:703.7px;top:647.1px;width:113.2px;height:118.6px;border:2px solid #f6f6f6;background:linear-gradient(180deg,#434649 0,#434649 50%,#4d4d4d 50%,#4d4d4d 100%)"></div>
<div class="t" style="left:703.7px;top:769.2px;width:113.6px;text-align:center;font-size:14.2px;color:#f4f4f4">30</div>
<div class="abs" style="left:835.9px;top:647.1px;width:113.2px;height:118.6px;border:2px solid #f6f6f6;background:linear-gradient(180deg,#5b5f63 0,#5b5f63 50%,#666666 50%,#666666 100%)"></div>
<div class="t" style="left:835.9px;top:769.2px;width:113.6px;text-align:center;font-size:14.2px;color:#f4f4f4">40</div>
<div class="abs" style="left:968.1px;top:647.1px;width:113.2px;height:118.6px;border:2px solid #f6f6f6;background:linear-gradient(180deg,#767a80 0,#767a80 50%,#808080 50%,#808080 100%)"></div>
<div class="t" style="left:968.1px;top:769.2px;width:113.6px;text-align:center;font-size:14.2px;color:#f4f4f4">50</div>
<div class="abs" style="left:1100.3px;top:647.1px;width:113.2px;height:118.6px;border:2px solid #f6f6f6;background:linear-gradient(180deg,#8f959c 0,#8f959c 50%,#999999 50%,#999999 100%)"></div>
<div class="t" style="left:1100.3px;top:769.2px;width:113.6px;text-align:center;font-size:14.2px;color:#f4f4f4">60</div>
<div class="abs" style="left:1232.5px;top:647.1px;width:113.2px;height:118.6px;border:2px solid #f6f6f6;background:linear-gradient(180deg,#a8afb7 0,#a8afb7 50%,#b3b3b3 50%,#b3b3b3 100%)"></div>
<div class="t" style="left:1232.5px;top:769.2px;width:113.6px;text-align:center;font-size:14.2px;color:#f4f4f4">70</div>
<div class="abs" style="left:1364.7px;top:647.1px;width:113.2px;height:118.6px;border:2px solid #f6f6f6;background:linear-gradient(180deg,#c3cbd6 0,#c3cbd6 50%,#cccccc 50%,#cccccc 100%)"></div>
<div class="t" style="left:1364.7px;top:769.2px;width:113.6px;text-align:center;font-size:14.2px;color:#f4f4f4">80</div>
<div class="abs" style="left:1496.9px;top:647.1px;width:113.2px;height:118.6px;border:2px solid #f6f6f6;background:linear-gradient(180deg,#dae4f1 0,#dae4f1 50%,#e6e6e6 50%,#e6e6e6 100%)"></div>
<div class="t" style="left:1496.9px;top:769.2px;width:113.6px;text-align:center;font-size:14.2px;color:#f4f4f4">90</div>
<div class="abs" style="left:1629.1px;top:647.1px;width:113.2px;height:118.6px;border:2px solid #f6f6f6;background:linear-gradient(180deg,#e8effd 0,#e8effd 50%,#f0f0f0 50%,#f0f0f0 100%)"></div>
<div class="t" style="left:1629.1px;top:769.2px;width:113.6px;text-align:center;font-size:14.2px;color:#f4f4f4">100</div>
<div class="t" style="left:292.6px;top:673.3px;font-size:13.8px;letter-spacing:0.35px;color:#f4f4f4;transform:translate(-50%,-50%) rotate(-90deg)">Actual</div>
<div class="t" style="left:292.6px;top:739.2px;font-size:13.8px;letter-spacing:0.35px;color:#f4f4f4;transform:translate(-50%,-50%) rotate(-90deg)">Target</div>
<div class="abs" style="left:0;top:791.3px;width:1920px;height:1.5px;background:#3a3a3a"></div>
<!-- current reading -->
<div class="t" id="cr" style="left:17.5px;top:824.2px;font-size:33.5px;color:#f2f2f2;letter-spacing:0.52px">Current Reading</div>
<div class="t" id="r0" style="left:17.6px;top:878.4px;font-size:27px;color:#f2f2f2;letter-spacing:0.93px">x: 0,2992</div>
<div class="t" id="r1" style="left:17.6px;top:925.1px;font-size:27px;color:#f2f2f2;letter-spacing:0.95px">y: 0,3153</div>
<div class="t" id="r2" style="left:18.8px;top:972.9px;font-size:27px;color:#f2f2f2;letter-spacing:0.7px">fL: 157,77</div>
<div class="t" id="r3" style="left:17.0px;top:1019.6px;font-size:27px;color:#f2f2f2;letter-spacing:1.54px">cd/m²: 540,57</div>
<!-- CIE -->
<div class="abs" style="left:377px;top:816.4px;width:336px;height:247.2px;background:#1e1e1e"></div>
<div class="abs" style="left:385px;top:824.2px;width:321px;height:234.5px;background:#333"></div>
<div class="abs" style="left:428.2px;top:827.2px;width:274.59999999999997px;height:199.39999999999986px;border:1.5px solid #9a9a9a;background:radial-gradient(ellipse 80% 90% at 49.5% 50.5%,#fff 0%,rgba(255,255,255,.86) 9%,rgba(255,255,255,.42) 38%,rgba(255,255,255,.1) 72%,rgba(255,255,255,0) 100%),conic-gradient(from 0deg at 49.5% 50.5%,#d0ffb4 0deg,#ffffc0 38deg,#ffdca8 58deg,#ffb0a8 92deg,#ff88b4 126deg,#ffb8f4 175deg,#dcc4ff 208deg,#a4bcff 236deg,#98f4ff 272deg,#84ffc4 306deg,#a8ffb8 335deg,#d0ffb4 360deg)"></div>
<svg width="1920" height="1166" style="left:0;top:0">
<defs><clipPath id="ciec"><rect x="429.7" y="828.7" width="271.59999999999997" height="196.39999999999986"/></clipPath></defs>
<path d="M462.6 1027.4 Q582.55 932.4 702.5 859.8" clip-path="url(#ciec)" fill="none" stroke="#000" stroke-width="3.2"/>
<rect x="557" y="919.1" width="15.1" height="15.5" fill="#fbfbfb" stroke="#000" stroke-width="1.9"/>
<circle cx="483.7" cy="996.9" r="4.45" fill="#3a3a3a" stroke="#050505" stroke-width="1.25"/>
<circle cx="481.4" cy="985.4" r="4.45" fill="#4c4c4c" stroke="#050505" stroke-width="1.25"/>
<circle cx="483.3" cy="979.5" r="4.45" fill="#666" stroke="#050505" stroke-width="1.25"/>
<circle cx="484.0" cy="974.3" r="4.45" fill="#808080" stroke="#050505" stroke-width="1.25"/>
<circle cx="484.4" cy="974.2" r="4.45" fill="#999" stroke="#050505" stroke-width="1.25"/>
<circle cx="484.8" cy="975.9" r="4.45" fill="#c6c6c6" stroke="#050505" stroke-width="1.25"/>
<circle cx="483.0" cy="978.9" r="4.45" fill="#d2d2d2" stroke="#050505" stroke-width="1.25"/>
<circle cx="487.3" cy="980.7" r="4.45" fill="#f3f3f3" stroke="#050505" stroke-width="1.25"/>
<circle cx="491.4" cy="979.4" r="4.45" fill="#fff" stroke="#050505" stroke-width="1.25"/>
<rect x="422" y="1001.1" width="6" height="2" fill="#dcdcdc"/>
<text x="420.8" y="1009.0" font-size="16.6" fill="#e2e2e2" text-anchor="end">0,31</text>
<rect x="422" y="961.5" width="6" height="2" fill="#dcdcdc"/>
<text x="420.8" y="969.4" font-size="16.6" fill="#e2e2e2" text-anchor="end">0,32</text>
<rect x="422" y="921.8" width="6" height="2" fill="#dcdcdc"/>
<text x="420.8" y="929.7" font-size="16.6" fill="#e2e2e2" text-anchor="end">0,33</text>
<rect x="422" y="882.2" width="6" height="2" fill="#dcdcdc"/>
<text x="420.8" y="890.1" font-size="16.6" fill="#e2e2e2" text-anchor="end">0,34</text>
<rect x="422" y="842.5" width="6" height="2" fill="#dcdcdc"/>
<text x="420.8" y="850.4" font-size="16.6" fill="#e2e2e2" text-anchor="end">0,35</text>
<rect x="438.5" y="1027.5" width="2" height="6" fill="#dcdcdc"/>
<text x="439.5" y="1050.3" font-size="16.6" fill="#e2e2e2" text-anchor="middle">0,29</text>
<rect x="493.1" y="1027.5" width="2" height="6" fill="#dcdcdc"/>
<text x="494.1" y="1050.3" font-size="16.6" fill="#e2e2e2" text-anchor="middle">0,3</text>
<rect x="547.6" y="1027.5" width="2" height="6" fill="#dcdcdc"/>
<text x="548.6" y="1050.3" font-size="16.6" fill="#e2e2e2" text-anchor="middle">0,31</text>
<rect x="602.1" y="1027.5" width="2" height="6" fill="#dcdcdc"/>
<text x="603.1" y="1050.3" font-size="16.6" fill="#e2e2e2" text-anchor="middle">0,32</text>
<rect x="656.7" y="1027.5" width="2" height="6" fill="#dcdcdc"/>
<text x="657.7" y="1050.3" font-size="16.6" fill="#e2e2e2" text-anchor="middle">0,33</text>
</svg>
<!-- table -->
<div class="abs" style="left:721.5px;top:801px;width:1115.5px;height:241px;background:#000"></div>
<div class="abs" style="left:723px;top:803px;width:1112.3px;height:31.3px;background:linear-gradient(180deg,#2d2d2d 0%,#313131 47%,#1a1a1a 51%,#121212 100%)"></div>
<div class="abs" style="left:723px;top:834.00px;width:1112.3px;height:30.02px;background:#454545"></div>
<div class="t" style="left:737px;top:841.2px;font-size:17.6px;font-weight:bold;color:#f6f6f6;letter-spacing:0.0px">x: CIE31</div>
<div class="t" style="left:902.0px;top:841.2px;font-size:17.6px;color:#f4f4f4;letter-spacing:-0.05px">0,278</div>
<div class="t" style="left:996.4px;top:841.2px;font-size:17.6px;color:#f4f4f4;letter-spacing:-0.05px">0,294</div>
<div class="t" style="left:1080.8px;top:841.2px;font-size:17.6px;color:#f4f4f4;letter-spacing:-0.05px">0,298</div>
<div class="t" style="left:1165.1px;top:841.2px;font-size:17.6px;color:#f4f4f4;letter-spacing:-0.05px">0,298</div>
<div class="t" style="left:1249.5px;top:841.2px;font-size:17.6px;color:#f4f4f4;letter-spacing:-0.05px">0,298</div>
<div class="t" style="left:1333.8px;top:841.2px;font-size:17.6px;color:#f4f4f4;letter-spacing:-0.05px">0,298</div>
<div class="t" style="left:1418.2px;top:841.2px;font-size:17.6px;color:#f4f4f4;letter-spacing:-0.05px">0,298</div>
<div class="t" style="left:1502.5px;top:841.2px;font-size:17.6px;color:#f4f4f4;letter-spacing:-0.05px">0,298</div>
<div class="t" style="left:1586.8px;top:841.2px;font-size:17.6px;color:#f4f4f4;letter-spacing:-0.05px">0,299</div>
<div class="t" style="left:1671.2px;top:841.2px;font-size:17.6px;color:#f4f4f4;letter-spacing:-0.05px">0,299</div>
<div class="t" style="left:1755.5px;top:841.2px;font-size:17.6px;color:#f4f4f4;letter-spacing:-0.05px">0,299</div>
<div class="abs" style="left:723px;top:863.72px;width:1112.3px;height:30.02px;background:#808080"></div>
<div class="t" style="left:737px;top:870.9px;font-size:17.6px;font-weight:bold;color:#f6f6f6;letter-spacing:0.0px">y: CIE31</div>
<div class="t" style="left:902.0px;top:870.9px;font-size:17.6px;color:#f4f4f4;letter-spacing:-0.05px">0,275</div>
<div class="t" style="left:996.4px;top:870.9px;font-size:17.6px;color:#f4f4f4;letter-spacing:-0.05px">0,300</div>
<div class="t" style="left:1080.8px;top:870.9px;font-size:17.6px;color:#f4f4f4;letter-spacing:-0.05px">0,311</div>
<div class="t" style="left:1165.1px;top:870.9px;font-size:17.6px;color:#f4f4f4;letter-spacing:-0.05px">0,314</div>
<div class="t" style="left:1249.5px;top:870.9px;font-size:17.6px;color:#f4f4f4;letter-spacing:-0.05px">0,316</div>
<div class="t" style="left:1333.8px;top:870.9px;font-size:17.6px;color:#f4f4f4;letter-spacing:-0.05px">0,317</div>
<div class="t" style="left:1418.2px;top:870.9px;font-size:17.6px;color:#f4f4f4;letter-spacing:-0.05px">0,317</div>
<div class="t" style="left:1502.5px;top:870.9px;font-size:17.6px;color:#f4f4f4;letter-spacing:-0.05px">0,316</div>
<div class="t" style="left:1586.8px;top:870.9px;font-size:17.6px;color:#f4f4f4;letter-spacing:-0.05px">0,317</div>
<div class="t" style="left:1671.2px;top:870.9px;font-size:17.6px;color:#f4f4f4;letter-spacing:-0.05px">0,315</div>
<div class="t" style="left:1755.5px;top:870.9px;font-size:17.6px;color:#f4f4f4;letter-spacing:-0.05px">0,315</div>
<div class="abs" style="left:723px;top:893.44px;width:1112.3px;height:30.02px;background:#454545"></div>
<div class="t" style="left:737px;top:900.6px;font-size:17.6px;font-weight:bold;color:#f6f6f6;letter-spacing:0.0px">Y</div>
<div class="t" style="left:902.0px;top:900.6px;font-size:17.6px;color:#f4f4f4;letter-spacing:-0.05px">0,739</div>
<div class="t" style="left:996.4px;top:900.6px;font-size:17.6px;color:#f4f4f4;letter-spacing:-0.05px">3,447</div>
<div class="t" style="left:1080.8px;top:900.6px;font-size:17.6px;color:#f4f4f4;letter-spacing:-0.05px">13,684</div>
<div class="t" style="left:1165.1px;top:900.6px;font-size:17.6px;color:#f4f4f4;letter-spacing:-0.05px">32,839</div>
<div class="t" style="left:1249.5px;top:900.6px;font-size:17.6px;color:#f4f4f4;letter-spacing:-0.05px">63,522</div>
<div class="t" style="left:1333.8px;top:900.6px;font-size:17.6px;color:#f4f4f4;letter-spacing:-0.05px">107,333</div>
<div class="t" style="left:1418.2px;top:900.6px;font-size:17.6px;color:#f4f4f4;letter-spacing:-0.05px">162,597</div>
<div class="t" style="left:1502.5px;top:900.6px;font-size:17.6px;color:#f4f4f4;letter-spacing:-0.05px">230,422</div>
<div class="t" style="left:1586.8px;top:900.6px;font-size:17.6px;color:#f4f4f4;letter-spacing:-0.05px">318,931</div>
<div class="t" style="left:1671.2px;top:900.6px;font-size:17.6px;color:#f4f4f4;letter-spacing:-0.05px">420,038</div>
<div class="t" style="left:1755.5px;top:900.6px;font-size:17.6px;color:#f4f4f4;letter-spacing:-0.05px">540,566</div>
<div class="abs" style="left:723px;top:923.16px;width:1112.3px;height:30.02px;background:#808080"></div>
<div class="t" style="left:737px;top:930.4px;font-size:17.6px;font-weight:bold;color:#f6f6f6;letter-spacing:0.3px">Target Y</div>
<div class="t" style="left:902.0px;top:930.4px;font-size:17.6px;color:#f4f4f4;letter-spacing:-0.05px">0,000</div>
<div class="t" style="left:996.4px;top:930.4px;font-size:17.6px;color:#f4f4f4;letter-spacing:-0.05px">5,584</div>
<div class="t" style="left:1080.8px;top:930.4px;font-size:17.6px;color:#f4f4f4;letter-spacing:-0.05px">17,895</div>
<div class="t" style="left:1165.1px;top:930.4px;font-size:17.6px;color:#f4f4f4;letter-spacing:-0.05px">39,068</div>
<div class="t" style="left:1249.5px;top:930.4px;font-size:17.6px;color:#f4f4f4;letter-spacing:-0.05px">71,824</div>
<div class="t" style="left:1333.8px;top:930.4px;font-size:17.6px;color:#f4f4f4;letter-spacing:-0.05px">116,687</div>
<div class="t" style="left:1418.2px;top:930.4px;font-size:17.6px;color:#f4f4f4;letter-spacing:-0.05px">172,196</div>
<div class="t" style="left:1502.5px;top:930.4px;font-size:17.6px;color:#f4f4f4;letter-spacing:-0.05px">240,661</div>
<div class="t" style="left:1586.8px;top:930.4px;font-size:17.6px;color:#f4f4f4;letter-spacing:-0.05px">326,409</div>
<div class="t" style="left:1671.2px;top:930.4px;font-size:17.6px;color:#f4f4f4;letter-spacing:-0.05px">427,749</div>
<div class="t" style="left:1755.5px;top:930.4px;font-size:17.6px;color:#f4f4f4;letter-spacing:-0.05px">540,566</div>
<div class="abs" style="left:723px;top:952.88px;width:1112.3px;height:30.02px;background:#454545"></div>
<div class="t" style="left:737px;top:960.1px;font-size:17.6px;font-weight:bold;color:#f6f6f6;letter-spacing:0.72px">Gamma Log/Log</div>
<div class="t" style="left:902.0px;top:960.1px;font-size:17.6px;color:#f4f4f4;letter-spacing:-0.05px">1,278</div>
<div class="t" style="left:996.4px;top:960.1px;font-size:17.6px;color:#f4f4f4;letter-spacing:-0.05px">2,214</div>
<div class="t" style="left:1080.8px;top:960.1px;font-size:17.6px;color:#f4f4f4;letter-spacing:-0.05px">2,284</div>
<div class="t" style="left:1165.1px;top:960.1px;font-size:17.6px;color:#f4f4f4;letter-spacing:-0.05px">2,314</div>
<div class="t" style="left:1249.5px;top:960.1px;font-size:17.6px;color:#f4f4f4;letter-spacing:-0.05px">2,337</div>
<div class="t" style="left:1333.8px;top:960.1px;font-size:17.6px;color:#f4f4f4;letter-spacing:-0.05px">2,346</div>
<div class="t" style="left:1418.2px;top:960.1px;font-size:17.6px;color:#f4f4f4;letter-spacing:-0.05px">2,352</div>
<div class="t" style="left:1502.5px;top:960.1px;font-size:17.6px;color:#f4f4f4;letter-spacing:-0.05px">2,372</div>
<div class="t" style="left:1586.8px;top:960.1px;font-size:17.6px;color:#f4f4f4;letter-spacing:-0.05px">2,365</div>
<div class="t" style="left:1671.2px;top:960.1px;font-size:17.6px;color:#f4f4f4;letter-spacing:-0.05px">2,445</div>
<div class="t" style="left:1755.5px;top:960.1px;font-size:17.6px;color:#f4f4f4;letter-spacing:-0.05px">2,275</div>
<div class="abs" style="left:723px;top:982.60px;width:1112.3px;height:30.02px;background:#808080"></div>
<div class="t" style="left:737px;top:989.8px;font-size:17.6px;font-weight:bold;color:#f6f6f6;letter-spacing:-1.7px">CCT</div>
<div class="t" style="left:902.0px;top:989.8px;font-size:17.6px;color:#f4f4f4;letter-spacing:0.12px">11057,000</div>
<div class="t" style="left:996.4px;top:989.8px;font-size:17.6px;color:#f4f4f4;letter-spacing:0.12px">8187,000</div>
<div class="t" style="left:1080.8px;top:989.8px;font-size:17.6px;color:#f4f4f4;letter-spacing:0.12px">7659,000</div>
<div class="t" style="left:1165.1px;top:989.8px;font-size:17.6px;color:#f4f4f4;letter-spacing:0.12px">7607,000</div>
<div class="t" style="left:1249.5px;top:989.8px;font-size:17.6px;color:#f4f4f4;letter-spacing:0.12px">7570,000</div>
<div class="t" style="left:1333.8px;top:989.8px;font-size:17.6px;color:#f4f4f4;letter-spacing:0.12px">7523,000</div>
<div class="t" style="left:1418.2px;top:989.8px;font-size:17.6px;color:#f4f4f4;letter-spacing:0.12px">7516,000</div>
<div class="t" style="left:1502.5px;top:989.8px;font-size:17.6px;color:#f4f4f4;letter-spacing:0.12px">7564,000</div>
<div class="t" style="left:1586.8px;top:989.8px;font-size:17.6px;color:#f4f4f4;letter-spacing:0.12px">7506,000</div>
<div class="t" style="left:1671.2px;top:989.8px;font-size:17.6px;color:#f4f4f4;letter-spacing:0.12px">7521,000</div>
<div class="t" style="left:1755.5px;top:989.8px;font-size:17.6px;color:#f4f4f4;letter-spacing:0.12px">7484,000</div>
<div class="abs" style="left:723px;top:1012.32px;width:1112.3px;height:30.02px;background:#454545"></div>
<div class="t" style="left:737px;top:1019.5px;font-size:17.6px;font-weight:bold;color:#f6f6f6;letter-spacing:0.4px">ΔE 2000</div>
<div class="t" style="left:902.0px;top:1019.5px;font-size:17.6px;color:#f4f4f4;letter-spacing:-0.05px">1,348</div>
<div class="t" style="left:996.4px;top:1019.5px;font-size:17.6px;color:#f4f4f4;letter-spacing:-0.05px">3,329</div>
<div class="t" style="left:1080.8px;top:1019.5px;font-size:17.6px;color:#f4f4f4;letter-spacing:-0.05px">3,536</div>
<div class="t" style="left:1165.1px;top:1019.5px;font-size:17.6px;color:#f4f4f4;letter-spacing:-0.05px">3,784</div>
<div class="t" style="left:1249.5px;top:1019.5px;font-size:17.6px;color:#f4f4f4;letter-spacing:-0.05px">4,249</div>
<div class="t" style="left:1333.8px;top:1019.5px;font-size:17.6px;color:#f4f4f4;letter-spacing:-0.05px">4,538</div>
<div class="t" style="left:1418.2px;top:1019.5px;font-size:17.6px;color:#f4f4f4;letter-spacing:-0.05px">4,828</div>
<div class="t" style="left:1502.5px;top:1019.5px;font-size:17.6px;color:#f4f4f4;letter-spacing:-0.05px">5,453</div>
<div class="t" style="left:1586.8px;top:1019.5px;font-size:17.6px;color:#f4f4f4;letter-spacing:-0.05px">5,675</div>
<div class="t" style="left:1671.2px;top:1019.5px;font-size:17.6px;color:#f4f4f4;letter-spacing:-0.05px">6,344</div>
<div class="t" style="left:1755.5px;top:1019.5px;font-size:17.6px;color:#f4f4f4;letter-spacing:-0.05px">6,698</div>
<div class="t" style="left:905.0px;width:80px;text-align:center;top:810.6px;font-size:17px;color:#fafafa;-webkit-text-stroke:0.3px #fafafa">0</div>
<div class="t" style="left:994.6px;width:80px;text-align:center;top:810.6px;font-size:17px;color:#fafafa;-webkit-text-stroke:0.3px #fafafa">10</div>
<div class="t" style="left:1078.9px;width:80px;text-align:center;top:810.6px;font-size:17px;color:#fafafa;-webkit-text-stroke:0.3px #fafafa">20</div>
<div class="t" style="left:1163.2px;width:80px;text-align:center;top:810.6px;font-size:17px;color:#fafafa;-webkit-text-stroke:0.3px #fafafa">30</div>
<div class="t" style="left:1247.6px;width:80px;text-align:center;top:810.6px;font-size:17px;color:#fafafa;-webkit-text-stroke:0.3px #fafafa">40</div>
<div class="t" style="left:1331.9px;width:80px;text-align:center;top:810.6px;font-size:17px;color:#fafafa;-webkit-text-stroke:0.3px #fafafa">50</div>
<div class="t" style="left:1416.2px;width:80px;text-align:center;top:810.6px;font-size:17px;color:#fafafa;-webkit-text-stroke:0.3px #fafafa">60</div>
<div class="t" style="left:1500.5px;width:80px;text-align:center;top:810.6px;font-size:17px;color:#fafafa;-webkit-text-stroke:0.3px #fafafa">70</div>
<div class="t" style="left:1584.8px;width:80px;text-align:center;top:810.6px;font-size:17px;color:#fafafa;-webkit-text-stroke:0.3px #fafafa">80</div>
<div class="t" style="left:1669.2px;width:80px;text-align:center;top:810.6px;font-size:17px;color:#fafafa;-webkit-text-stroke:0.3px #fafafa">90</div>
<div class="t" style="left:1753.5px;width:80px;text-align:center;top:810.6px;font-size:17px;color:#fafafa;-webkit-text-stroke:0.3px #fafafa">100</div>
<!-- bottom bar -->
<div class="abs" style="left:0;top:1113px;width:1920px;height:53px;background:#2c2c2c"></div>
<div class="abs" style="left:1402px;top:1113px;width:247px;height:53px;background:linear-gradient(90deg,#3b3b3b,#242424)"></div>
<div class="abs" style="left:1.9px;top:1113px;width:125.8px;height:51.6px;border-radius:5px 5px 2px 2px;background:linear-gradient(180deg,#9c9c9c 0%,#8a8a8a 55%,#707070 70%,#5a5a5a 100%);border:1px solid #7a7a7a;border-top-color:#b0b0b0;box-shadow:inset 0 0 0 0.5px #999"></div>
<div class="abs" style="left:6.1px;top:1117.4px;width:117px;height:29.8px;border-radius:3.5px;background:#000000;box-shadow:0 0 1.5px rgba(0,0,0,.55)"></div>
<div class="t" style="left:1.9px;top:1152.5px;width:126px;text-align:center;font-size:8.8px;color:#2c2c2c;font-weight:bold">0</div>
<div class="abs" style="left:129.2px;top:1113px;width:125.8px;height:51.6px;border-radius:5px 5px 2px 2px;background:linear-gradient(180deg,#9c9c9c 0%,#8a8a8a 55%,#707070 70%,#5a5a5a 100%);border:1px solid #7a7a7a;border-top-color:#b0b0b0;box-shadow:inset 0 0 0 0.5px #999"></div>
<div class="abs" style="left:133.3px;top:1117.4px;width:117px;height:29.8px;border-radius:3.5px;background:#1a1a1a;box-shadow:0 0 1.5px rgba(0,0,0,.55)"></div>
<div class="t" style="left:129.2px;top:1152.5px;width:126px;text-align:center;font-size:8.8px;color:#2c2c2c;font-weight:bold">10</div>
<div class="abs" style="left:256.4px;top:1113px;width:125.8px;height:51.6px;border-radius:5px 5px 2px 2px;background:linear-gradient(180deg,#9c9c9c 0%,#8a8a8a 55%,#707070 70%,#5a5a5a 100%);border:1px solid #7a7a7a;border-top-color:#b0b0b0;box-shadow:inset 0 0 0 0.5px #999"></div>
<div class="abs" style="left:260.6px;top:1117.4px;width:117px;height:29.8px;border-radius:3.5px;background:#333333;box-shadow:0 0 1.5px rgba(0,0,0,.55)"></div>
<div class="t" style="left:256.4px;top:1152.5px;width:126px;text-align:center;font-size:8.8px;color:#2c2c2c;font-weight:bold">20</div>
<div class="abs" style="left:383.8px;top:1113px;width:125.8px;height:51.6px;border-radius:5px 5px 2px 2px;background:linear-gradient(180deg,#9c9c9c 0%,#8a8a8a 55%,#707070 70%,#5a5a5a 100%);border:1px solid #7a7a7a;border-top-color:#b0b0b0;box-shadow:inset 0 0 0 0.5px #999"></div>
<div class="abs" style="left:387.9px;top:1117.4px;width:117px;height:29.8px;border-radius:3.5px;background:#4c4c4c;box-shadow:0 0 1.5px rgba(0,0,0,.55)"></div>
<div class="t" style="left:383.8px;top:1152.5px;width:126px;text-align:center;font-size:8.8px;color:#2c2c2c;font-weight:bold">30</div>
<div class="abs" style="left:511.1px;top:1113px;width:125.8px;height:51.6px;border-radius:5px 5px 2px 2px;background:linear-gradient(180deg,#9c9c9c 0%,#8a8a8a 55%,#707070 70%,#5a5a5a 100%);border:1px solid #7a7a7a;border-top-color:#b0b0b0;box-shadow:inset 0 0 0 0.5px #999"></div>
<div class="abs" style="left:515.2px;top:1117.4px;width:117px;height:29.8px;border-radius:3.5px;background:#666666;box-shadow:0 0 1.5px rgba(0,0,0,.55)"></div>
<div class="t" style="left:511.1px;top:1152.5px;width:126px;text-align:center;font-size:8.8px;color:#2c2c2c;font-weight:bold">40</div>
<div class="abs" style="left:638.4px;top:1113px;width:125.8px;height:51.6px;border-radius:5px 5px 2px 2px;background:linear-gradient(180deg,#9c9c9c 0%,#8a8a8a 55%,#707070 70%,#5a5a5a 100%);border:1px solid #7a7a7a;border-top-color:#b0b0b0;box-shadow:inset 0 0 0 0.5px #999"></div>
<div class="abs" style="left:642.6px;top:1117.4px;width:117px;height:29.8px;border-radius:3.5px;background:#808080;box-shadow:0 0 1.5px rgba(0,0,0,.55)"></div>
<div class="t" style="left:638.4px;top:1152.5px;width:126px;text-align:center;font-size:8.8px;color:#2c2c2c;font-weight:bold">50</div>
<div class="abs" style="left:765.6px;top:1113px;width:125.8px;height:51.6px;border-radius:5px 5px 2px 2px;background:linear-gradient(180deg,#9c9c9c 0%,#8a8a8a 55%,#707070 70%,#5a5a5a 100%);border:1px solid #7a7a7a;border-top-color:#b0b0b0;box-shadow:inset 0 0 0 0.5px #999"></div>
<div class="abs" style="left:769.9px;top:1117.4px;width:117px;height:29.8px;border-radius:3.5px;background:#999999;box-shadow:0 0 1.5px rgba(0,0,0,.55)"></div>
<div class="t" style="left:765.6px;top:1152.5px;width:126px;text-align:center;font-size:8.8px;color:#2c2c2c;font-weight:bold">60</div>
<div class="abs" style="left:893.0px;top:1113px;width:125.8px;height:51.6px;border-radius:5px 5px 2px 2px;background:linear-gradient(180deg,#9c9c9c 0%,#8a8a8a 55%,#707070 70%,#5a5a5a 100%);border:1px solid #7a7a7a;border-top-color:#b0b0b0;box-shadow:inset 0 0 0 0.5px #999"></div>
<div class="abs" style="left:897.2px;top:1117.4px;width:117px;height:29.8px;border-radius:3.5px;background:#b2b2b2;box-shadow:0 0 1.5px rgba(0,0,0,.55)"></div>
<div class="t" style="left:893.0px;top:1152.5px;width:126px;text-align:center;font-size:8.8px;color:#2c2c2c;font-weight:bold">70</div>
<div class="abs" style="left:1020.2px;top:1113px;width:125.8px;height:51.6px;border-radius:5px 5px 2px 2px;background:linear-gradient(180deg,#9c9c9c 0%,#8a8a8a 55%,#707070 70%,#5a5a5a 100%);border:1px solid #7a7a7a;border-top-color:#b0b0b0;box-shadow:inset 0 0 0 0.5px #999"></div>
<div class="abs" style="left:1024.5px;top:1117.4px;width:117px;height:29.8px;border-radius:3.5px;background:#cccccc;box-shadow:0 0 1.5px rgba(0,0,0,.55)"></div>
<div class="t" style="left:1020.2px;top:1152.5px;width:126px;text-align:center;font-size:8.8px;color:#2c2c2c;font-weight:bold">80</div>
<div class="abs" style="left:1147.5px;top:1113px;width:125.8px;height:51.6px;border-radius:5px 5px 2px 2px;background:linear-gradient(180deg,#9c9c9c 0%,#8a8a8a 55%,#707070 70%,#5a5a5a 100%);border:1px solid #7a7a7a;border-top-color:#b0b0b0;box-shadow:inset 0 0 0 0.5px #999"></div>
<div class="abs" style="left:1151.8px;top:1117.4px;width:117px;height:29.8px;border-radius:3.5px;background:#e6e6e6;box-shadow:0 0 1.5px rgba(0,0,0,.55)"></div>
<div class="t" style="left:1147.5px;top:1152.5px;width:126px;text-align:center;font-size:8.8px;color:#2c2c2c;font-weight:bold">90</div>
<div class="abs" style="left:1274.8px;top:1113px;width:125.8px;height:53px;border-radius:5px 5px 0 0;background:linear-gradient(180deg,#1c1c1c,#2a2a2a);border:1px solid #222"></div>
<div class="abs" style="left:1279.0px;top:1117.4px;width:117px;height:29.8px;border-radius:3.5px;background:#ffffff;box-shadow:0 0 1.5px rgba(0,0,0,.55)"></div>
<div class="t" style="left:1274.8px;top:1152.5px;width:126px;text-align:center;font-size:8.8px;color:#fff;font-weight:bold">100</div>
<div class="abs" style="left:1879px;top:1113px;width:41px;height:27px;background:#2b2b2b"></div>
<div class="abs" style="left:1649px;top:1113px;width:40px;height:15px;border-radius:4px 4px 0 0;background:linear-gradient(180deg,#a0a0a0,#8a8a8a);border:1px solid #888;border-bottom:1px solid #555"></div>
<div class="abs" style="left:1649px;top:1129px;width:40px;height:36px;background:linear-gradient(180deg,#7e7e7e,#6a6a6a);border:1px solid #777"></div>
<div class="abs" style="left:1690.0px;top:1113px;width:38px;height:25.4px;background:linear-gradient(180deg,#a2a2a2 0%,#8c8c8c 50%,#6e6e6e 100%);border-left:1px solid #b4b4b4;border-right:1px solid #4a4a4a;border-top:1px solid #aaa;border-radius:4px 0 0 0"></div>
<div class="abs" style="left:1727.9px;top:1113px;width:38px;height:25.4px;background:linear-gradient(180deg,#a2a2a2 0%,#8c8c8c 50%,#6e6e6e 100%);border-left:1px solid #b4b4b4;border-right:1px solid #4a4a4a;border-top:1px solid #aaa;border-radius:0 0 0 0"></div>
<div class="abs" style="left:1765.8px;top:1113px;width:38px;height:25.4px;background:linear-gradient(180deg,#a2a2a2 0%,#8c8c8c 50%,#6e6e6e 100%);border-left:1px solid #b4b4b4;border-right:1px solid #4a4a4a;border-top:1px solid #aaa;border-radius:0 0 0 0"></div>
<div class="abs" style="left:1803.7px;top:1113px;width:38px;height:25.4px;background:linear-gradient(180deg,#a2a2a2 0%,#8c8c8c 50%,#6e6e6e 100%);border-left:1px solid #b4b4b4;border-right:1px solid #4a4a4a;border-top:1px solid #aaa;border-radius:0 0 0 0"></div>
<div class="abs" style="left:1841.6px;top:1113px;width:38px;height:25.4px;background:linear-gradient(180deg,#a2a2a2 0%,#8c8c8c 50%,#6e6e6e 100%);border-left:1px solid #b4b4b4;border-right:1px solid #4a4a4a;border-top:1px solid #aaa;border-radius:0 3px 0 0"></div>
<div class="abs" style="left:1690px;top:1139.2px;width:114.5px;height:25.8px;border-radius:5px 0 0 3px;background:linear-gradient(180deg,#a2a2a2 0%,#8c8c8c 50%,#6e6e6e 100%);border:1px solid #999;border-top-color:#bbb;border-right-color:#555"></div>
<div class="abs" style="left:1804.5px;top:1139.2px;width:114px;height:25.8px;border-radius:0 5px 3px 0;background:linear-gradient(180deg,#a2a2a2 0%,#8c8c8c 50%,#6e6e6e 100%);border:1px solid #999;border-top-color:#bbb;border-left-color:#b0b0b0"></div>
<div class="t" id="bk" style="left:1736.6px;top:1142.5px;font-size:19px;color:#262626;letter-spacing:0.15px;-webkit-text-stroke:0.25px #262626">Back</div>
<div class="t" id="nx" style="left:1826px;top:1142.5px;font-size:19px;color:#262626;letter-spacing:1.67px;-webkit-text-stroke:0.25px #262626">Next</div>
<svg width="280" height="56" style="left:1640px;top:1110px">
 <g transform="translate(-1640,-1110)">
  <circle cx="1668.7" cy="1120.5" r="5.6" fill="#868686" stroke="#a4a4a4" stroke-width=".6"/><path d="M1665.6 1122.2h6.2l-3.1-3.6z" fill="#2a2a2a"/>
  <rect x="1656.5" y="1134.5" width="24" height="24" rx="3.5" fill="url(#sg)" stroke="#1e1e1e" stroke-width="2"/>
  <rect x="1663" y="1141" width="11" height="11" fill="#050505"/>
  <defs><linearGradient id="cg" x1="0" y1="0" x2="0" y2="1"><stop offset="0" stop-color="#787878"/><stop offset="1" stop-color="#a4a4a4"/></linearGradient><linearGradient id="sg" x1="0" y1="0" x2="0" y2="1"><stop offset="0" stop-color="#b4b4b4"/><stop offset="0.5" stop-color="#a8a8a8"/><stop offset="0.52" stop-color="#8e8e8e"/><stop offset="1" stop-color="#9a9a9a"/></linearGradient></defs><g fill="url(#cg)" stroke="#8a8a8a" stroke-width=".5">
   <circle cx="1709" cy="1125.5" r="8.3"/><circle cx="1747" cy="1125.5" r="8.3"/><circle cx="1785" cy="1125.5" r="8.3"/><circle cx="1822.5" cy="1125.5" r="8.3"/><circle cx="1860" cy="1125.5" r="8.3"/>
   <circle cx="1715.5" cy="1152" r="8.3"/><circle cx="1894" cy="1152" r="8.3"/>
  </g>
  <circle cx="1899" cy="1126" r="9" fill="#3c3c3c"/>
  <rect x="1705.3" y="1121.8" width="7.4" height="7.4" fill="#2a2a2a"/>
  <path d="M1744.3 1120.6v9.8l7-4.9z" fill="#2a2a2a"/>
  <g fill="none" stroke="#2a2a2a" stroke-width="1.3"><path d="M1782.5 1121h-2v9h2M1787.5 1121h2v9h-2"/><path d="M1783.6 1125.5h.9M1785.6 1125.5h.9" stroke-width="1.2"/></g>
  <path d="M1822.5 1125.5c-1.2-2-2.3-2.6-3.4-2.6a2.6 2.6 0 0 0 0 5.2c1.1 0 2.2-.6 3.4-2.6c1.2 2 2.3 2.6 3.4 2.6a2.6 2.6 0 0 0 0-5.2c-1.1 0-2.2.6-3.4 2.6z" fill="none" stroke="#2a2a2a" stroke-width="1.3"/>
  <g fill="none" stroke="#2a2a2a" stroke-width="1.5"><path d="M1855.6 1124.6a4.6 4.6 0 0 1 8-2"/><path d="M1864.4 1126.4a4.6 4.6 0 0 1 -8 2"/></g>
  <path d="M1864.8 1120.2v3.4h-3.4z M1855.2 1130.8v-3.4h3.4z" fill="#2a2a2a"/>
  <g fill="none" stroke="#2a2a2a" stroke-width="1.3"><path d="M1715 1148.2l-3 3.8 3 3.8M1719 1148.2l-3 3.8 3 3.8"/><path d="M1891 1148.2l3 3.8-3 3.8M1895 1148.2l3 3.8-3 3.8"/></g>
 </g>
</svg>
</div></body></html>
